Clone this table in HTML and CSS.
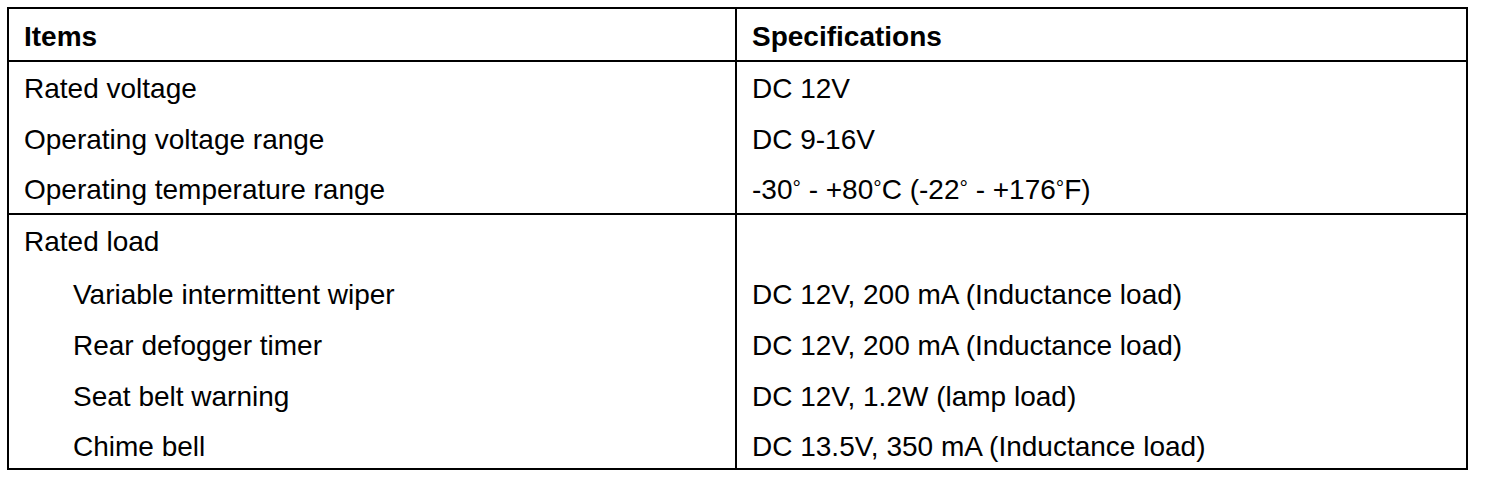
FILE: index.html
```html
<!DOCTYPE html>
<html lang="en">

<head>
    <meta charset="UTF-8" />
    <meta name="viewport" content="width=device-width, initial-scale=1.0" />
    <title>Specifications</title>
    <link rel="stylesheet" href="styles.css">
</head>

<body>
    <table class="spec-table">
        <thead>
            <tr>
                <th class="col-item">Items</th>
                <th class="col-spec">Specifications</th>
            </tr>
        </thead>
        <tbody>
            <tr>
                <td>Rated voltage</td>
                <td>DC 12V</td>
            </tr>
            <tr>
                <td>Operating voltage range</td>
                <td>DC 9-16V</td>
            </tr>
            <tr>
                <td>Operating temperature range</td>
                <td>-30<span class="deg">&deg;</span> - +80<span class="deg">&deg;</span>C (-22<span class="deg">&deg;</span> - +176<span class="deg">&deg;</span>F)</td>
            </tr>
        </tbody>
        <tbody class="load">
            <tr>
                <td>Rated load</td>
                <td></td>
            </tr>
            <tr class="sub-row">
                <td class="sub">Variable intermittent wiper</td>
                <td>DC 12V, 200 mA (Inductance load)</td>
            </tr>
            <tr class="sub-row">
                <td class="sub">Rear defogger timer</td>
                <td>DC 12V, 200 mA (Inductance load)</td>
            </tr>
            <tr class="sub-row">
                <td class="sub">Seat belt warning</td>
                <td>DC 12V, 1.2W (lamp load)</td>
            </tr>
            <tr class="sub-row">
                <td class="sub">Chime bell</td>
                <td>DC 13.5V, 350 mA (Inductance load)</td>
            </tr>
        </tbody>
    </table>
</body>

</html>
```

FILE: styles.css
```css
* {
    margin: 0;
    padding: 0;
    box-sizing: border-box;
}

body {
    background: #fff;
    color: #000;
    font-family: "Liberation Sans", Arial, sans-serif;
    padding: 7px 0 0 7px;
}

.spec-table {
    width: 1461px;
    border-collapse: collapse;
    border: 2px solid #000;
    font-size: 28px;
    table-layout: fixed;
}

.col-item {
    width: 728px;
}

th,
td {
    padding: 4px 15px 0;
    text-align: left;
    vertical-align: middle;
    white-space: nowrap;
}

th {
    height: 53px;
    font-weight: bold;
    border-bottom: 2px solid #000;
}

td {
    height: 51px;
}

th + th,
td + td {
    border-left: 2px solid #000;
}

tbody + tbody {
    border-top: 2px solid #000;
}

.sub-row td {
    padding-top: 8px;
}

.sub {
    padding-left: 64px;
}

.deg {
    font-size: 0.75em;
    vertical-align: 0.2em;
}
```
